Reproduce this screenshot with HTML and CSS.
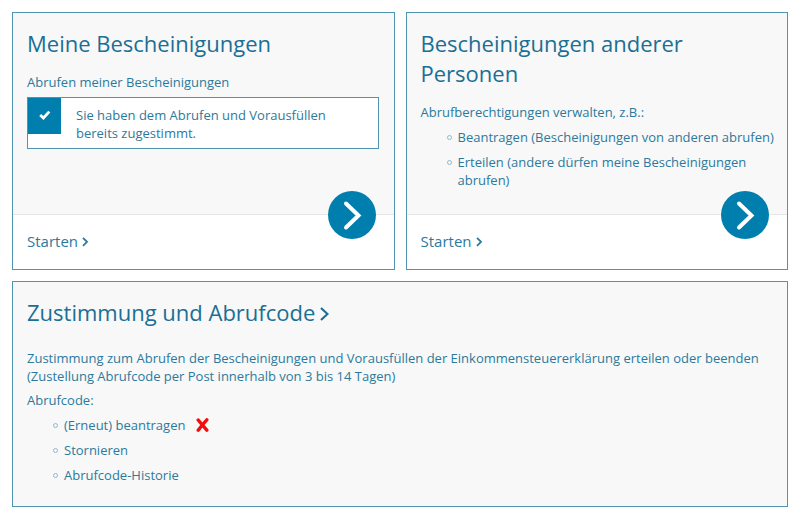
FILE: index.html
```html
<!DOCTYPE html>
<html lang="de">
<head>
  <meta charset="UTF-8">
  <meta name="viewport" content="width=device-width, initial-scale=1.0">
  <title>Bescheinigungen</title>
  <link rel="stylesheet" href="styles.css">
</head>
<body>
  <main class="tiles">
    <section class="tile">
      <div class="tile-body">
        <h2>Meine Bescheinigungen</h2>
        <p>Abrufen meiner Bescheinigungen</p>
        <div class="notice">
          <span class="notice-icon">
            <svg width="12" height="12" viewBox="0 0 12 12"><path d="M1.2 5 4.4 8 10.3 1.6" fill="none" stroke="#fff" stroke-width="2.8"/></svg>
          </span>
          <p>Sie haben dem Abrufen und Vorausfüllen bereits zugestimmt.</p>
        </div>
      </div>
      <div class="tile-footer">
        <a class="start" href="#">Starten<svg width="7" height="10" viewBox="0 0 7 10"><path d="M1 .8 5 4.8 1 8.8" fill="none" stroke="currentColor" stroke-width="1.8"/></svg></a>
        <a class="round" href="#" aria-label="Meine Bescheinigungen starten">
          <svg width="48" height="48" viewBox="0 0 48 48"><path d="M18 12.5 30.5 24.5 18 36.5" fill="none" stroke="#fff" stroke-width="4" stroke-linecap="round"/></svg>
        </a>
      </div>
    </section>

    <section class="tile">
      <div class="tile-body">
        <h2>Bescheinigungen anderer Personen</h2>
        <p>Abrufberechtigungen verwalten, z.B.:</p>
        <ul>
          <li>Beantragen (Bescheinigungen von anderen abrufen)</li>
          <li>Erteilen (andere dürfen meine Bescheinigungen abrufen)</li>
        </ul>
      </div>
      <div class="tile-footer">
        <a class="start" href="#">Starten<svg width="7" height="10" viewBox="0 0 7 10"><path d="M1 .8 5 4.8 1 8.8" fill="none" stroke="currentColor" stroke-width="1.8"/></svg></a>
        <a class="round" href="#" aria-label="Bescheinigungen anderer Personen starten">
          <svg width="48" height="48" viewBox="0 0 48 48"><path d="M18 12.5 30.5 24.5 18 36.5" fill="none" stroke="#fff" stroke-width="4" stroke-linecap="round"/></svg>
        </a>
      </div>
    </section>

    <section class="tile wide">
      <div class="tile-body">
        <h2><a href="#">Zustimmung und Abrufcode<svg width="14" height="14" viewBox="0 0 14 14"><path d="M6 1 12.5 7 6 13" fill="none" stroke="currentColor" stroke-width="2.2"/></svg></a></h2>
        <p>Zustimmung zum Abrufen der Bescheinigungen und Vorausfüllen der Einkommensteuererklärung erteilen oder beenden<br>(Zustellung Abrufcode per Post innerhalb von 3 bis 14 Tagen)</p>
        <p>Abrufcode:</p>
        <ul>
          <li><a href="#">(Erneut) beantragen</a><svg class="cross" width="13" height="14" viewBox="0 0 13 14"><path d="M2.2 2Q5.5 6 10.8 12.2M10.8 1.8Q6.5 6.5 2.2 12.2" fill="none" stroke="#f20d0d" stroke-width="3.4" stroke-linecap="round"/></svg></li>
          <li><a href="#">Stornieren</a></li>
          <li><a href="#">Abrufcode-Historie</a></li>
        </ul>
      </div>
    </section>
  </main>
</body>
</html>
```
FILE: styles.css
```css
*, *::before {
  box-sizing: border-box;
}
body {
  margin: 0;
  padding: 12px;
  background-color: #fff;
  color: #2b7a9d;
  font-family: "Open Sans", sans-serif;
  font-size: 13px;
  line-height: 18px;
}
a {
  color: inherit;
  text-decoration: none;
}
h2, p, ul {
  margin: 0;
}
.tiles {
  display: grid;
  grid-template-columns: 1fr 1fr;
  gap: 11px;
}
.tile {
  display: flex;
  flex-direction: column;
  border: 1px solid #4f94b0;
  background-color: #f8f8f8;
}
.wide {
  grid-column: 1 / -1;
}
.tile-body {
  flex: 1;
  padding: 15px 15px 25px 14px;
}
.wide .tile-body {
  padding-bottom: 22px;
}
h2 {
  margin-bottom: 15px;
  color: #1a6f95;
  font-size: 22px;
  font-weight: 400;
  line-height: 30px;
}
.wide h2 {
  margin-bottom: 22px;
}
p + p {
  margin-top: 6px;
}

/* consent notice */
.notice {
  display: flex;
  align-items: flex-start;
  margin-top: 6px;
  border: 1px solid #4f94b0;
  background-color: #fff;
}
.notice-icon {
  display: flex;
  flex: none;
  align-items: center;
  justify-content: center;
  width: 33px;
  height: 36px;
  background-color: #007fae;
}
.notice p {
  padding: 8px 15px 6px;
}

/* lists */
ul {
  margin-right: -8px;
  padding: 0;
  list-style: none;
}
li {
  display: flex;
  align-items: center;
  margin-top: 7px;
  padding-left: 26px;
}
li::before {
  content: "";
  flex: none;
  align-self: flex-start;
  width: 5px;
  height: 5px;
  margin: 7px 6px 0 0;
  border: 1px solid #8fb9cb;
  border-radius: 50%;
}
.cross {
  margin-left: 11px;
}

/* footer with the round arrow */
.tile-footer {
  position: relative;
  padding: 16px 14px 18px;
  border-top: 1px solid #e6e6e6;
  background-color: #fff;
  font-size: 15px;
  line-height: 20px;
}
.start svg {
  margin-left: 4px;
}
.round {
  position: absolute;
  top: -24px;
  right: 18px;
  width: 48px;
  height: 48px;
  border-radius: 50%;
  background-color: #007fae;
}
.round svg {
  display: block;
}
```
